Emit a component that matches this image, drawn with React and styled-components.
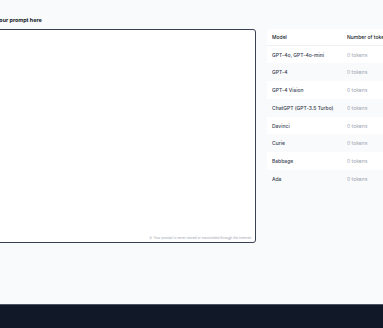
import React from "react";
import styled, { createGlobalStyle } from "styled-components";

const GlobalStyle = createGlobalStyle`
  html, body {
    margin: 0;
    padding: 0;
    background: #f9fafb;
    font-family: Inter, "Noto Sans", sans-serif;
    color: #111827;
  }
`;

const Page = styled.div`
  width: 383px;
  height: 328px;
  overflow: hidden;
  display: flex;
  flex-direction: column;
`;

const Main = styled.main`
  flex: 1;
  display: grid;
  grid-template-columns: 260px 160px;
  column-gap: 11px;
  margin-left: -4px;
  padding-top: 16px;
`;

const PromptColumn = styled.div`
  display: flex;
  flex-direction: column;
`;

const Label = styled.label`
  font-size: 5.4px;
  font-weight: 700;
  line-height: 8px;
  margin-bottom: 5px;
`;

const PromptBox = styled.div`
  height: 212px;
  background: #fff;
  border: 1px solid #374151;
  border-radius: 3px;
  display: flex;
  flex-direction: column;
  justify-content: flex-end;
`;

const Note = styled.div`
  display: flex;
  align-items: center;
  justify-content: flex-end;
  gap: 1.5px;
  padding: 0 3px 2px;
  font-size: 3.3px;
  color: #9ca3af;
`;

const Card = styled.div`
  margin-top: 13px;
  align-self: start;
  background: #fff;
  border-radius: 3px;
  overflow: hidden;
`;

const Table = styled.table`
  width: 100%;
  border-collapse: collapse;
  font-size: 5px;
`;

const HeadCell = styled.th`
  text-align: left;
  font-weight: 500;
  height: 16px;
  padding: 0 5px;
  border-bottom: 1px solid #eef0f3;
  color: #111827;
  white-space: nowrap;
`;

const Row = styled.tr`
  height: 17.8px;
  background: ${(p) => (p.$striped ? "#f9fafb" : "#fff")};
`;

const Cell = styled.td`
  padding: 0 5px;
  white-space: nowrap;
  color: ${(p) => (p.$muted ? "#9ca3af" : "#374151")};
  font-weight: ${(p) => (p.$muted ? 400 : 500)};
  width: ${(p) => (p.$first ? "65px" : "auto")};
`;

const Footer = styled.footer`
  height: 23px;
  background: #111827;
  border-top: 1px solid #4b5563;
`;

const LockIcon = () => (
  <svg width="3.4" height="3.4" viewBox="0 0 24 24" fill="none" stroke="currentColor" strokeWidth="2">
    <rect x="5" y="11" width="14" height="10" rx="2" />
    <path d="M8 11V7a4 4 0 0 1 8 0v4" />
  </svg>
);

const models = [
  "GPT-4o, GPT-4o-mini",
  "GPT-4",
  "GPT-4 Vision",
  "ChatGPT (GPT-3.5 Turbo)",
  "Davinci",
  "Curie",
  "Babbage",
  "Ada",
];

const App = () => (
  <>
    <GlobalStyle />
    <Page>
      <Main>
        <PromptColumn>
          <Label>Your prompt here</Label>
          <PromptBox>
            <Note>
              <LockIcon />
              Your prompt is never stored or transmitted through the internet.
            </Note>
          </PromptBox>
        </PromptColumn>
        <Card>
          <Table>
            <thead>
              <tr>
                <HeadCell>Model</HeadCell>
                <HeadCell>Number of tokens</HeadCell>
              </tr>
            </thead>
            <tbody>
              {models.map((m, i) => (
                <Row key={m} $striped={i % 2 === 1}>
                  <Cell $first>{m}</Cell>
                  <Cell $muted>0 tokens</Cell>
                </Row>
              ))}
            </tbody>
          </Table>
        </Card>
      </Main>
      <Footer />
    </Page>
  </>
);

export default App;
